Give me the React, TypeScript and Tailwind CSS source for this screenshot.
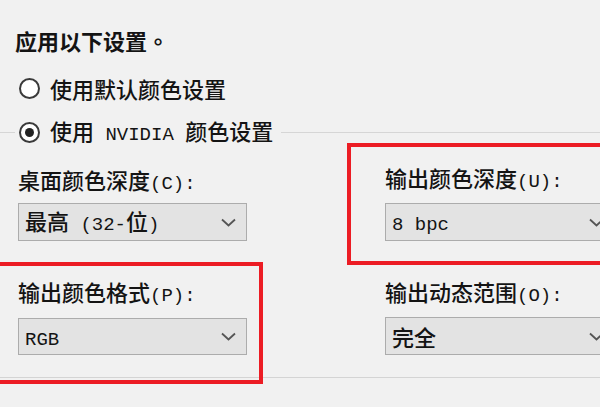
import React from 'react';

const cjk = "font-['Noto_Sans_CJK_SC','Noto_Sans_CJK_JP',sans-serif]";

function M({ children }: { children: React.ReactNode }) {
    return (
        <span className="font-['Liberation_Mono',monospace] text-[19px] font-normal">
            {children}
        </span>
    );
}

function Radio({ checked }: { checked?: boolean }) {
    return (
        <span className="w-[21px] h-[21px] rounded-full border-2 border-[#3a3a3a] bg-white flex items-center justify-center shrink-0">
            {checked ? (
                <span className="w-[9px] h-[9px] rounded-full bg-[#222]" />
            ) : null}
        </span>
    );
}

function Chevron() {
    return (
        <svg width="15" height="9" viewBox="0 0 15 9" fill="none">
            <path d="M1 1.5 L7.5 7.5 L14 1.5" stroke="#555" strokeWidth="1.8" />
        </svg>
    );
}

function Select({
    children,
    className,
}: {
    children: React.ReactNode;
    className: string;
}) {
    return (
        <div
            className={`${className} flex items-center justify-between border border-[#acacac] bg-[#e3e3e3] pl-[6px] pr-[10px] shrink-0`}
        >
            <span className="text-[22px] leading-none whitespace-pre">
                {children}
            </span>
            <Chevron />
        </div>
    );
}

function Label({ children }: { children: React.ReactNode }) {
    return (
        <div className="text-[22px] leading-[26px] h-[26px] whitespace-nowrap">
            {children}
        </div>
    );
}

export default function App() {
    return (
        <div
            className={`w-[600px] h-[407px] overflow-hidden bg-[#f1f1f1] text-[#141414] font-medium ${cjk}`}
        >
            <div className="pt-[27px] pl-[15px] text-[22px] leading-[26px] font-bold">
                应用以下设置
                <span className="font-['Noto_Sans_CJK_TC',sans-serif]">。</span>
            </div>

            <div className="mt-[23px] h-[24px] pl-[19px] flex items-center gap-[10px]">
                <Radio />
                <span className="text-[22px] leading-none">使用默认颜色设置</span>
            </div>

            <div className="mt-[21px] h-[22px] flex items-center">
                <span className="w-[15px] h-px bg-[#d6d6d6]" />
                <span className="ml-[4px]">
                    <Radio checked />
                </span>
                <span className="ml-[10px] text-[22px] leading-none whitespace-pre">
                    使用<M> NVIDIA </M>颜色设置
                </span>
                <span className="ml-[8px] flex-1 h-px bg-[#d6d6d6]" />
            </div>

            <div className="h-[235px] border-b border-[#d4d4d4] flex">
                <div className="w-[263px] shrink-0 flex flex-col">
                    <div className="pt-[23px] pl-[18px]">
                        <Label>
                            桌面颜色深度<M>(C):</M>
                        </Label>
                        <Select className="mt-[11px] h-[38px] w-[229px]">
                            最高<M> (32-</M>位<M>)</M>
                        </Select>
                    </div>
                    <div className="mt-[21px] h-[122px] w-[263px] shrink-0 border-4 border-l-0 border-[#ec1c24] pt-[12px] pl-[18px]">
                        <Label>
                            输出颜色格式<M>(P):</M>
                        </Label>
                        <Select className="mt-[14px] h-[37px] w-[229px]">
                            <M>RGB</M>
                        </Select>
                    </div>
                </div>

                <div className="ml-[84px] w-[260px] shrink-0 flex flex-col">
                    <div className="h-[122px] w-[260px] shrink-0 border-4 border-[#ec1c24] pt-[17px] pl-[34px]">
                        <Label>
                            输出颜色深度<M>(U):</M>
                        </Label>
                        <Select className="mt-[13px] h-[38px] w-[230px]">
                            <M>8 bpc</M>
                        </Select>
                    </div>
                    <div className="mt-[13px] pl-[38px]">
                        <Label>
                            输出动态范围<M>(O):</M>
                        </Label>
                        <Select className="mt-[13px] h-[38px] w-[230px]">
                            完全
                        </Select>
                    </div>
                </div>
            </div>
        </div>
    );
}
